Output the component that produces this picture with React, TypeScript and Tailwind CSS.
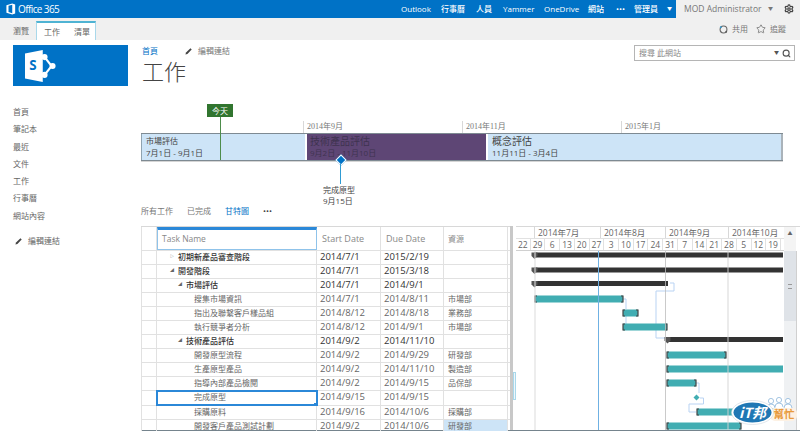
import React from "react";
import { Search, Settings, Star } from "lucide-react";

const font = { fontFamily: '"Open Sans", "Noto Sans CJK TC", sans-serif' };

const topLinks = [
  { label: "Outlook", w: "w-[40px]" },
  { label: "行事曆", w: "w-[35px]" },
  { label: "人員", w: "w-[27px]" },
  { label: "Yammer", w: "w-[41px]" },
  { label: "OneDrive", w: "w-[44px]" },
  { label: "網站", w: "w-[28px]" },
  { label: "•••", w: "w-[18px]" },
  { label: "管理員", w: "w-[33px]" },
];

const navItems = ["首頁", "筆記本", "最近", "文件", "工作", "行事曆", "網站內容"];

const tasks = [
  { name: "初期新產品審查階段", start: "2014/7/1", due: "2015/2/19", res: "", bold: true, indent: "pl-[21px]", arrow: "▷" },
  { name: "開發階段", start: "2014/7/1", due: "2015/3/18", res: "", bold: true, indent: "pl-[21px]", arrow: "◢" },
  { name: "市場評估", start: "2014/7/1", due: "2014/9/1", res: "", bold: true, indent: "pl-[29px]", arrow: "◢" },
  { name: "搜集市場資訊", start: "2014/7/1", due: "2014/8/11", res: "市場部", bold: false, indent: "pl-[37px]", arrow: "" },
  { name: "指出及聯繫客戶樣品組", start: "2014/8/12", due: "2014/8/18", res: "業務部", bold: false, indent: "pl-[37px]", arrow: "" },
  { name: "執行競爭者分析", start: "2014/8/12", due: "2014/9/1", res: "市場部", bold: false, indent: "pl-[37px]", arrow: "" },
  { name: "技術產品評估", start: "2014/9/2", due: "2014/11/10", res: "", bold: true, indent: "pl-[29px]", arrow: "◢" },
  { name: "開發原型流程", start: "2014/9/2", due: "2014/9/29", res: "研發部", bold: false, indent: "pl-[37px]", arrow: "" },
  { name: "生產原型產品", start: "2014/9/2", due: "2014/11/10", res: "製造部", bold: false, indent: "pl-[37px]", arrow: "" },
  { name: "指導內部產品檢閱", start: "2014/9/2", due: "2014/9/15", res: "品保部", bold: false, indent: "pl-[37px]", arrow: "" },
  { name: "完成原型", start: "2014/9/15", due: "2014/9/15", res: "", bold: false, indent: "pl-[37px]", arrow: "", selected: true },
  { name: "採購原料", start: "2014/9/16", due: "2014/10/6", res: "採購部", bold: false, indent: "pl-[37px]", arrow: "" },
  { name: "開發客戶產品測試計劃", start: "2014/9/2", due: "2014/10/6", res: "研發部", bold: false, indent: "pl-[37px]", arrow: "", highlight: true },
];

const months = [
  { label: "2014年7月", w: "w-[66px]" },
  { label: "2014年8月", w: "w-[65px]" },
  { label: "2014年9月", w: "w-[63px]" },
  { label: "2014年10月", w: "w-[56px]" },
];

const days = [22, 29, 6, 13, 20, 27, 3, 10, 17, 24, 31, 7, 14, 21, 28, 5, 12, 19];

const PencilIcon = ({ className }: { className?: string }) => (
  <svg viewBox="0 0 10 10" className={className}>
    <path d="M0.5 9.5 L1.3 7 L6.8 1.6 L8.4 3.2 L3 8.7 Z" fill="#444" />
  </svg>
);

const SummaryBar = ({ y, x1, x2 }: { y: number; x1: number; x2: number }) => (
  <g>
    <rect x={x1} y={y - 2.5} width={x2 - x1} height={5} fill="#333" />
    <path d={`M${x1 - 2.5} ${y - 2.5} h6 v3.5 l-3 3 l-3 -3 Z`} fill="#555" />
  </g>
);

const TaskBar = ({ y, x1, x2, open }: { y: number; x1: number; x2: number; open?: boolean }) => (
  <g>
    <rect x={x1} y={y - 3.5} width={x2 - x1} height={7} fill="#41adb2" />
    <path d={`M${x1 + 2} ${y - 3} h-2 v6 h2`} fill="none" stroke="#444" strokeWidth={1.2} />
    {!open && <path d={`M${x2 - 2} ${y - 3} h2 v6 h-2`} fill="none" stroke="#444" strokeWidth={1.2} />}
  </g>
);

const GanttChart = () => (
  <svg viewBox="516 251 268 179" className="h-[179px] w-[268px] shrink-0">
    <path d="M670 283 h4 v8 h-18 v47 h9" fill="none" stroke="#b9d3f3" />
    <path d="M623 299 h3 v10 M626 316 v8" fill="none" stroke="#b9d3f3" />
    <path d="M696 383 h3 v10" fill="none" stroke="#b9d3f3" />
    <path d="M700 398 h3.5 v6 h-14.5 v8 h7" fill="none" stroke="#b9d3f3" />

    <SummaryBar y={255} x1={534} x2={783} />
    <SummaryBar y={270} x1={534} x2={783} />
    <SummaryBar y={283.5} x1={534} x2={668} />
    <TaskBar y={299} x1={535} x2={623} />
    <TaskBar y={313} x1={623} x2={638} />
    <TaskBar y={327} x1={623} x2={667} />
    <SummaryBar y={339.5} x1={667} x2={783} />
    <TaskBar y={355} x1={667} x2={726} />
    <TaskBar y={369} x1={667} x2={783} open />
    <TaskBar y={383} x1={667} x2={696} />
    <path d="M696.5 394.5 l3 3 l-3 3 l-3 -3 Z" fill="#41adb2" />
    <TaskBar y={412} x1={697} x2={783} open />
    <TaskBar y={426} x1={667} x2={741} />

    <line x1={535} x2={535} y1={251} y2={430} stroke="#dedede" strokeWidth={1.5} opacity={0.7} />
    <line x1={665.5} x2={665.5} y1={251} y2={430} stroke="#bdbdbd" opacity={0.8} />
    <line x1={728} x2={728} y1={251} y2={430} stroke="#d4d4d4" strokeWidth={1.5} opacity={0.6} />
    <line x1={598.5} x2={598.5} y1={251} y2={430} stroke="#6fb1e3" />
  </svg>
);

const Person = ({ x, y }: { x: number; y: number }) => (
  <g fill="#fff" stroke="#8fb8dc" strokeWidth={0.8}>
    <path d={`M${x - 4} ${y + 7} q0 -4 4 -4 q4 0 4 4`} />
    <circle cx={x} cy={y} r={2.6} />
  </g>
);

const App = () => {
  return (
    <div className="relative flex h-[431px] w-[800px] flex-col overflow-hidden bg-white text-[8px] text-[#555]" style={font}>
      {/* suite bar */}
      <div className="flex h-[18px] shrink-0">
        <div className="flex w-[676px] items-center bg-[#0072c6] text-white">
          <div className="flex w-[56px] shrink-0 items-center gap-[2px] pl-[6px]">
            <svg viewBox="0 0 12 14" className="h-[12px] w-[10px] shrink-0">
              <path d="M0.5 2.5 L7.5 0.5 L11 1.5 V12.5 L7.5 13.5 L0.5 11.5 Z M7.5 2 L3 3.2 V10.5 L7.5 12 Z" fill="#fff" fillRule="evenodd" />
            </svg>
            <span className="whitespace-nowrap text-[10px] tracking-[-0.6px]">Office 365</span>
          </div>
          <div className="ml-[345px] flex items-center text-[8px] font-medium">
            {topLinks.map((l) => (
              <span key={l.label} className={`${l.w} whitespace-nowrap`}>{l.label}</span>
            ))}
            <span className="text-[5px]">▼</span>
          </div>
        </div>
        <div className="flex flex-1 items-center bg-[#f0f0f0] pl-[8px] text-[8.5px] text-[#777]">
          <span className="w-[84px] whitespace-nowrap">MOD Administrator</span>
          <span className="text-[5px]">▼</span>
          <Settings size={10} className="ml-[11px] text-[#444]" strokeWidth={3} />
        </div>
      </div>

      {/* ribbon */}
      <div className="flex h-[22px] shrink-0 items-end bg-[#f0f0f0]">
        <div className="flex h-[19px] w-[36px] items-center pl-[13px] text-[#666]">瀏覽</div>
        <div className="flex h-[19px] w-[60px] items-center gap-[14px] border-x border-t-2 border-x-[#a9d8ea] border-t-[#4fb3d3] bg-white pl-[7px] text-[#666]">
          <span>工作</span>
          <span>清單</span>
        </div>
        <div className="ml-auto flex h-full items-center pr-[14px] text-[#777]">
          <svg viewBox="0 0 10 10" className="h-[9px] w-[9px]">
            <circle cx={5} cy={5} r={3.8} fill="none" stroke="#666" strokeWidth={1.2} />
            <circle cx={2} cy={2.5} r={1} fill="#2f9bd3" />
            <circle cx={8} cy={7.5} r={1} fill="#555" />
          </svg>
          <span className="ml-[4px]">共用</span>
          <Star size={10} className="ml-[8px] text-[#777]" />
          <span className="ml-[4px]">追蹤</span>
        </div>
      </div>

      {/* site header */}
      <div className="flex h-[60px] shrink-0 items-start pt-[5px]">
        <div className="ml-[13px] flex h-[41px] w-[115px] items-center bg-[#0072c6] pl-[10px]">
          <svg viewBox="0 0 36 36" className="h-[32px] w-[36px]">
            <path d="M0 4 L20 0 V36 L0 32 Z" fill="#fff" />
            <text x={9} y={23} fontSize={15} fontWeight={700} fill="#0072c6" textAnchor="middle" fontFamily="Open Sans">S</text>
            <path d="M22 8 L30 18 L22 28" fill="none" stroke="#fff" strokeWidth={2.4} />
            <circle cx={22} cy={8} r={3.4} fill="#fff" />
            <circle cx={31} cy={18} r={3.4} fill="#fff" />
            <circle cx={22} cy={28} r={3.4} fill="#fff" />
          </svg>
        </div>
        <div className="ml-[14px] flex flex-col">
          <div className="flex items-center leading-[12px]">
            <span className="text-[#0072c6]">首頁</span>
            <PencilIcon className="ml-[27px] h-[8px] w-[8px]" />
            <span className="ml-[5px] text-[#777]">編輯連結</span>
          </div>
          <div className="text-[22px] leading-[28px] font-light text-[#444]">工作</div>
        </div>
        <div className="ml-auto mr-[5px] flex h-[16px] w-[161px] items-center border border-[#b5b5b5] pl-[4px] text-[#888]">
          <span>搜尋 此網站</span>
          <span className="ml-auto text-[5px] text-[#555]">▼</span>
          <Search size={9} strokeWidth={3} className="mx-[3px] text-[#555]" />
        </div>
      </div>

      {/* body */}
      <div className="flex min-h-0 flex-1">
        <aside className="flex w-[141px] shrink-0 flex-col pl-[13px] pt-[6px] text-[#666]">
          {navItems.map((item) => (
            <div key={item} className="h-[17.3px] leading-[12px]">{item}</div>
          ))}
          <div className="mt-[8px] flex items-center leading-[12px]">
            <PencilIcon className="ml-[2px] h-[8px] w-[8px]" />
            <span className="ml-[5px]">編輯連結</span>
          </div>
        </aside>

        <main className="min-w-0 flex-1">
          {/* timeline */}
          <div className="relative h-[105px] w-[642px]">
            <div className="flex pl-[162px] pt-[21px]">
              {["2014年9月", "2014年11月", "2015年1月"].map((d) => (
                <div key={d} className="h-[12px] w-[159px] border-l border-[#d8d8d8] pl-[3px] leading-[11px] text-[#777]" style={{ fontFamily: '"Liberation Serif", "Noto Sans CJK TC", serif' }}>
                  {d}
                </div>
              ))}
            </div>
            <div className="flex h-[28px] border-y border-[#7e8a92] shadow-[0_1px_0_#d5d5d5]">
              <div className="w-[164px] border-l border-[#8fa3b0] bg-[#cde4f7] pl-[4px] leading-[12px] text-[#444]">
                <div className="mt-[1px]">市場評估</div>
                <div>7月1日 - 9月1日</div>
              </div>
              <div className="w-[181px] border-l-2 border-white bg-[#5e4675] pl-[3px] text-[#3f3350]">
                <div className="text-[10px] leading-[14px]">技術產品評估</div>
                <div className="leading-[10px]">9月2日 - 11月10日</div>
              </div>
              <div className="flex-1 border-x-2 border-l-white border-r-[#aab3ba] bg-[#cde4f7] pl-[4px] text-[#444]">
                <div className="text-[10px] leading-[14px]">概念評估</div>
                <div className="leading-[10px]">11月11日 - 3月4日</div>
              </div>
            </div>
            {/* today flag */}
            <div className="absolute left-[66px] top-[4px] flex h-[13px] w-[26px] items-center justify-center bg-[#31752f] text-white">今天</div>
            <div className="absolute left-[79px] top-[17px] h-[43px] w-px bg-[#4d8c4b]" />
            {/* milestone */}
            <div className="absolute left-[196px] top-[56px] h-[8px] w-[8px] rotate-45 border border-white bg-[#0072c6]" />
            <div className="absolute left-[199px] top-[64px] h-[20px] w-px bg-[#2f9bd3]" />
            <div className="absolute left-[182px] top-[84px] leading-[11px] text-[#444]">
              <div>完成原型</div>
              <div>9月15日</div>
            </div>
          </div>

          {/* views */}
          <div className="flex h-[12px] items-center leading-[12px] text-[#777]">
            <span className="w-[46px]">所有工作</span>
            <span className="w-[38px]">已完成</span>
            <span className="w-[38px] text-[#0072c6]">甘特圖</span>
            <span className="text-[#444]">•••</span>
          </div>

          {/* grid + gantt */}
          <div className="mt-[9px] flex h-[205px] border-b border-[#75848d]">
            <div className="w-[369px] shrink-0 border-t border-[#d8d8d8] text-[#666]">
              <div className="grid h-[24px] grid-cols-[16px_160px_64px_63px_64px] border-b border-[#e1e1e1]">
                <div className="border-x border-[#e1e1e1]" />
                <div className="flex items-center border-x border-b border-t-[3px] border-[#8fc3ea] border-t-[#2b88d8] pl-[4px] text-[8.5px] text-[#888]">Task Name</div>
                <div className="flex items-center border-r border-[#e1e1e1] pl-[5px] text-[9px] text-[#888]">Start Date</div>
                <div className="flex items-center border-r border-[#e1e1e1] pl-[5px] text-[9px] text-[#888]">Due Date</div>
                <div className="flex items-center border-r border-[#e1e1e1] pl-[4px] text-[#888]">資源</div>
              </div>
              {tasks.map((t) => (
                <div key={t.name} className={`grid h-[14.05px] grid-cols-[16px_160px_64px_63px_64px] border-b border-[#e1e1e1] leading-[11px] last:h-[10.4px] last:border-b-0 ${t.bold ? "font-medium text-[#333]" : "text-[#666]"}`}>
                  <div className="border-x border-[#e1e1e1]" />
                  <div className={`relative flex items-start whitespace-nowrap border-r border-[#e1e1e1] ${t.indent} ${t.selected ? "outline-2 -outline-offset-1 outline-[#2b88d8]" : ""}`}>
                    {t.arrow && <span className="absolute -ml-[8px] text-[4px] text-[#666]">{t.arrow}</span>}
                    {t.name}
                    {t.selected && <span className="absolute -bottom-px -right-px h-[3px] w-[3px] bg-[#2b88d8]" />}
                  </div>
                  <div className="border-r border-[#e1e1e1] pl-[3px] text-[9.5px]">{t.start}</div>
                  <div className="border-r border-[#e1e1e1] pl-[3px] text-[9.5px]">{t.due}</div>
                  <div className={`border-r border-[#e1e1e1] pl-[4px] ${t.highlight ? "bg-[#cde4f7]" : ""}`}>{t.res}</div>
                </div>
              ))}
            </div>

            {/* splitter */}
            <div className="relative w-[6px] shrink-0">
              <div className="h-full w-[3px] bg-[#c8c8c8]" />
              <div className="absolute left-[3px] top-[146px] flex h-[28px] w-[3px] items-center justify-center border border-[#a9d8ea] bg-[#eef6fb]" />
            </div>

            <div className="flex min-w-0 flex-1 flex-col border-t border-[#d8d8d8]">
              <div className="flex h-[24px] shrink-0">
                <div className="w-[268px] shrink-0 text-[#666]">
                  <div className="flex h-[12px] border-b border-[#e1e1e1] pl-[18px] text-[8.5px] leading-[11px]">
                    {months.map((m) => (
                      <div key={m.label} className={`${m.w} whitespace-nowrap border-l border-[#d8d8d8] pl-[3px]`}>{m.label}</div>
                    ))}
                  </div>
                  <div className="flex h-[12px] border-b border-[#d0d0d0] text-[8.5px] leading-[11px]">
                    {days.map((d, i) => (
                      <div key={i} className="w-[14.72px] shrink-0 border-r border-[#e1e1e1] text-center">{d}</div>
                    ))}
                  </div>
                </div>
                <div className="w-[12px] bg-[#f4f4f4] pt-[3px] text-center text-[5px] leading-[6px] text-[#666]">▲</div>
              </div>
              <div className="flex min-h-0 flex-1">
                <GanttChart />
                {/* scrollbar */}
                <div className="flex w-[12px] flex-col bg-[#eff1f3]">
                  <div className="flex h-[70px] items-center justify-center bg-[#dfe3e8]">
                    <div className="h-[5px] w-[4px] border-y border-[#999]" />
                  </div>
                </div>
                <div className="w-[4px] border-l border-[#d0d0d0]" />
              </div>
            </div>
          </div>
        </main>
      </div>

      {/* watermark */}
      <div className="absolute left-[730px] top-[394px] h-[37px] w-[68px]">
        <svg viewBox="0 0 68 37" className="h-full w-full">
          <Person x={41} y={7} />
          <Person x={49} y={6} />
          <Person x={58} y={7} />
          <rect x={40} y={14} width={27} height={13} rx={5} fill="#fdf1e3" />
          <ellipse cx={22.5} cy={18.5} rx={21} ry={12} fill="#fff" stroke="#c5cfd8" strokeWidth={0.5} />
          <ellipse cx={22.5} cy={18.5} rx={19} ry={10} fill="#1f77b4" />
          <text x={22.5} y={23.5} textAnchor="middle" fontSize={14} fontWeight={700} fontStyle="italic" fill="#fff" fontFamily="Noto Sans CJK TC">iT邦</text>
          <text x={54} y={24} textAnchor="middle" fontSize={10.5} fontWeight={700} fill="#e89a3c" fontFamily="Noto Sans CJK TC">幫忙</text>
        </svg>
      </div>
    </div>
  );
};

export default App;
